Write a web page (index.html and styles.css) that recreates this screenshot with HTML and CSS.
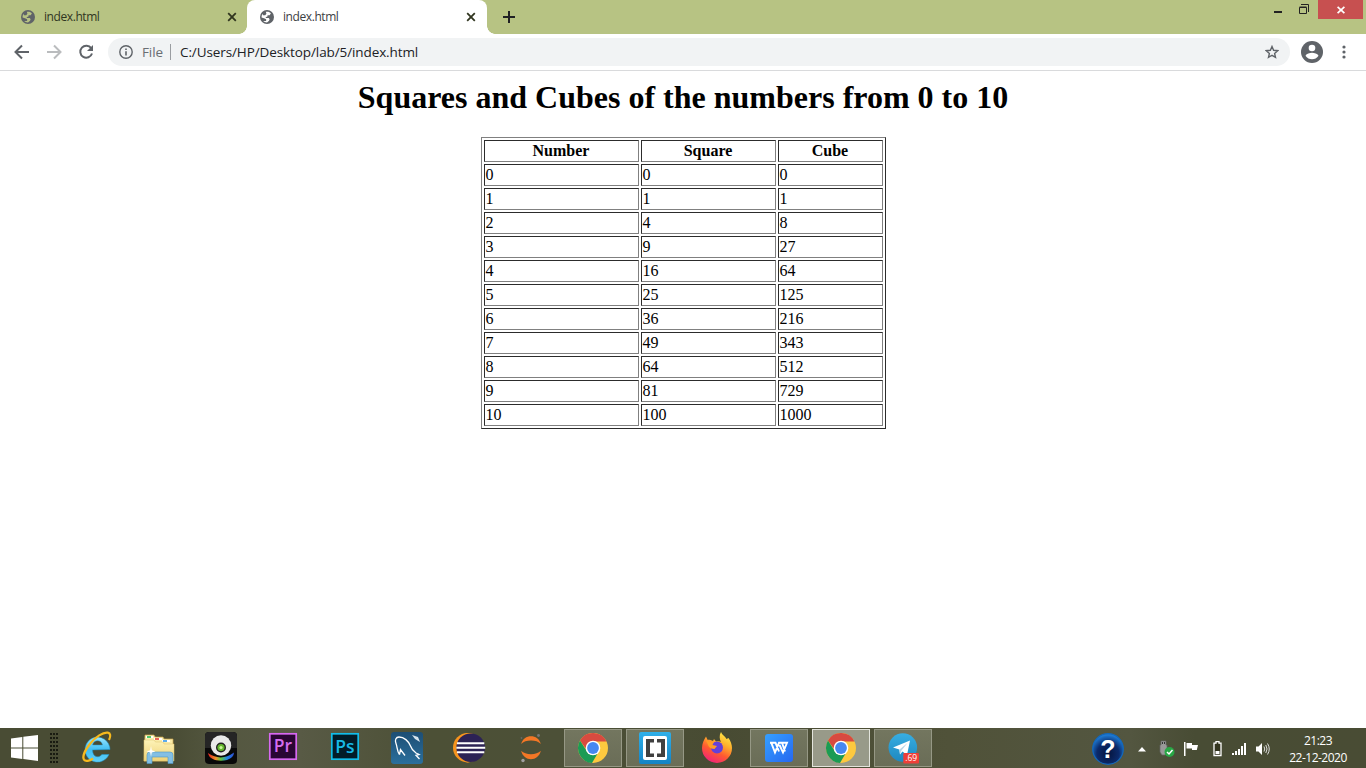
FILE: index.html
```html
<!DOCTYPE html>
<html lang="en">
<head>
<meta charset="utf-8">
<title>index.html</title>
<link rel="stylesheet" href="styles.css">
</head>
<body>
<svg class="defs" width="0" height="0" aria-hidden="true">
  <defs>
    <linearGradient id="ie" x1="0" y1="0" x2="0" y2="1"><stop offset="0" stop-color="#9be7ff"/><stop offset=".5" stop-color="#3fbdf2"/><stop offset="1" stop-color="#5fd0f8"/></linearGradient>
    <linearGradient id="folder" x1="0" y1="0" x2="0" y2="1"><stop offset="0" stop-color="#fdf3b8"/><stop offset="1" stop-color="#efd276"/></linearGradient>
    <linearGradient id="rainbow"><stop offset="0" stop-color="#e02020"/><stop offset=".3" stop-color="#f0902a"/><stop offset=".5" stop-color="#5cc840"/><stop offset=".75" stop-color="#2080e8"/><stop offset="1" stop-color="#3050d0"/></linearGradient>
    <linearGradient id="sql" x1="0" y1="0" x2="0" y2="1"><stop offset="0" stop-color="#1d4e74"/><stop offset="1" stop-color="#2b6f9c"/></linearGradient>
    <linearGradient id="brk" x1="0" y1="0" x2="0" y2="1"><stop offset="0" stop-color="#2fb0ea"/><stop offset="1" stop-color="#1583c4"/></linearGradient>
    <linearGradient id="fox" x1=".8" y1="0" x2=".3" y2="1"><stop offset="0" stop-color="#fff04a"/><stop offset=".35" stop-color="#ffb02c"/><stop offset=".65" stop-color="#ff5a30"/><stop offset="1" stop-color="#f0207c"/></linearGradient>
    <linearGradient id="wps" x1="0" y1="0" x2="1" y2="1"><stop offset="0" stop-color="#35a0ff"/><stop offset="1" stop-color="#2668f0"/></linearGradient>
    <linearGradient id="tg" x1="0" y1="0" x2="0" y2="1"><stop offset="0" stop-color="#37aee2"/><stop offset="1" stop-color="#1e88c0"/></linearGradient>
    <radialGradient id="help" cx=".5" cy=".65" r=".6"><stop offset="0" stop-color="#05143c"/><stop offset=".6" stop-color="#0b2a6b"/><stop offset="1" stop-color="#1e78d0"/></radialGradient>
    <symbol id="globe" viewBox="0 0 24 24"><circle cx="12" cy="12" r="12" fill="#5f6368"/><path class="land" d="M10 3.200c4-.8 7 .5 8.700 2.300L16.500 9H13l-.5 2.500-3 .5 1 1.500h4.500l1.500 2.500-1 2.500-3.500 3c-3 0-5-1-6.500-2.500h5V16l-2.500-1.500-5.300-1.800C2.600 10 3.400 8 5 6.500V9h4l2-2.500z"/></symbol>
    <symbol id="chrome" viewBox="0 0 36 36">
      <circle cx="18" cy="18" r="15" fill="#fdc93f"/>
      <path d="M5 10.500A15 15 0 0 1 31.500 11.500H18a6.500 6.500 0 0 0-5.900 9z" fill="#d84a40"/>
      <path d="M5 10.500A15 15 0 0 0 17 33l6.200-10.500a6.900 6.900 0 0 1-11.200-1z" fill="#1a9b55"/>
      <circle cx="18" cy="18" r="7.300" fill="#fff"/><circle cx="18" cy="18" r="5.900" fill="#4688f0"/>
    </symbol>
  </defs>
</svg>

<header class="tabstrip">
  <div class="tab">
    <svg class="favicon" width="14" height="14"><use href="#globe"/></svg>
    <span class="tab-title">index.html</span>
    <svg class="tab-close" width="10" height="10" viewBox="0 0 10 10"><path d="M1.200 1.200 8.800 8.800M8.800 1.200 1.200 8.800"/></svg>
  </div>
  <div class="tab active">
    <svg class="favicon" width="14" height="14"><use href="#globe"/></svg>
    <span class="tab-title">index.html</span>
    <svg class="tab-close" width="10" height="10" viewBox="0 0 10 10"><path d="M1.200 1.200 8.800 8.800M8.800 1.200 1.200 8.800"/></svg>
  </div>
  <svg class="new-tab" width="12" height="12" viewBox="0 0 12 12"><path d="M6 0v12M0 6h12"/></svg>
  <div class="window-controls">
    <svg class="minimize" width="8" height="19" viewBox="0 0 8 19"><path d="M0 11h8v2H0z" fill="#222"/></svg>
    <svg class="restore" width="10" height="19" viewBox="0 0 10 19"><path d="M.5 7.500h7v6h-7zM.5 7h7" fill="none" stroke="#222"/><path d="M2 4.500h7.500V12" fill="none" stroke="#222"/></svg>
    <div class="window-close"><svg width="8" height="8" viewBox="0 0 8 8"><path d="m.6.8 6.800 6.400M7.400.8.6 7.200" stroke="#fff" stroke-width="1.700"/></svg></div>
  </div>
</header>

<nav class="toolbar">
  <svg class="back" width="16" height="16" viewBox="0 0 16 16"><path d="M15 8H2M8 1.500 1.500 8 8 14.500"/></svg>
  <svg class="forward" width="16" height="16" viewBox="0 0 16 16"><path d="M1 8h13M8 1.500 14.500 8 8 14.500"/></svg>
  <svg class="reload" width="16" height="16" viewBox="0 0 16 16"><path d="M13.200 4.200A6 6 0 1 0 14 9.500"/><path d="M15 1v6H9z" class="solid"/></svg>
  <div class="omnibox">
    <svg class="info" width="14" height="14" viewBox="0 0 14 14"><circle cx="7" cy="7" r="6.200" fill="none" stroke="#5f6368" stroke-width="1.400"/><path d="M6.200 3.400h1.600V5H6.200zM6.200 6.200h1.600v4.400H6.200z" fill="#5f6368"/></svg>
    <span class="scheme">File</span>
    <span class="divider"></span>
    <span class="url">C:/Users/HP/Desktop/lab/5/index.html</span>
    <svg class="star" width="14" height="14" viewBox="0 0 14 14"><path d="m7 1.500 1.600 3.800 4.100.4-3.100 2.700.9 4L7 10.300l-3.500 2.100.9-4L1.300 5.700l4.100-.4z"/></svg>
  </div>
  <svg class="avatar" width="22" height="22" viewBox="0 0 22 22"><circle cx="11" cy="11" r="11" fill="#5f6368"/><circle cx="11" cy="7" r="3.300" fill="#fff"/><path d="M4.500 14.700c1-2.200 4.300-3 6.500-3s5.500.8 6.500 3C16 17 13.500 18.300 11 18.300S6 17 4.500 14.700z" fill="#fff"/></svg>
  <svg class="menu" width="4" height="14" viewBox="0 0 4 14"><g fill="#5f6368"><circle cx="2" cy="2" r="1.600"/><circle cx="2" cy="7" r="1.600"/><circle cx="2" cy="12" r="1.600"/></g></svg>
</nav>

<main class="page">
  <h1 class="heading">Squares and Cubes of the numbers from 0 to 10</h1>
  <table class="powers">
    <colgroup><col class="col-number"><col class="col-square"><col class="col-cube"></colgroup>
    <tr><th>Number</th><th>Square</th><th>Cube</th></tr>
    <tr><td>0</td><td>0</td><td>0</td></tr>
    <tr><td>1</td><td>1</td><td>1</td></tr>
    <tr><td>2</td><td>4</td><td>8</td></tr>
    <tr><td>3</td><td>9</td><td>27</td></tr>
    <tr><td>4</td><td>16</td><td>64</td></tr>
    <tr><td>5</td><td>25</td><td>125</td></tr>
    <tr><td>6</td><td>36</td><td>216</td></tr>
    <tr><td>7</td><td>49</td><td>343</td></tr>
    <tr><td>8</td><td>64</td><td>512</td></tr>
    <tr><td>9</td><td>81</td><td>729</td></tr>
    <tr><td>10</td><td>100</td><td>1000</td></tr>
  </table>
</main>

<footer class="taskbar">
  <svg class="start" width="27" height="26" viewBox="0 0 27 26"><path d="M0 3.600 11.300 2v10.500H0zM12.300 1.800 27 0v12.500H12.300zM0 13.500h11.300V24L0 22.400zM12.300 13.500H27V26l-14.700-1.900z" fill="#fff"/></svg>
  <div class="grip"></div>
  <div class="apps">
    <div class="app"><svg width="36" height="36" viewBox="0 0 36 36">
      <path d="M31 19.500a12.500 12.500 0 1 0-1 5h-7.200c-2.800 4.200-9.300 2.600-9.300-4.600zM13.600 15c.8-5.800 9.200-5.800 9.900 0z" fill="url(#ie)" fill-rule="evenodd" stroke="#2196cf" stroke-width=".5"/>
      <path d="M30 10c2-4 1.500-6.800-1.200-7.300C24 2 16.500 7 11.500 13.200S3 26.500 5 29.700c1.500 2.200 5.500 1.200 9-1.200" fill="none" stroke="#f7b91d" stroke-width="2.200"/>
    </svg></div>
    <div class="app"><svg width="36" height="36" viewBox="0 0 36 36">
      <path d="M4 5h9l1 2h8l1 2h9v22H3z" fill="url(#folder)" stroke="#c9a54b" stroke-width=".7"/>
      <path d="M5 6h7v2H5zM13 8h8v2h-8zM21 10h8v2h-8z" fill="#fff"/>
      <path d="M6 6.200h4v1.600H6z" fill="#28b848"/><path d="M14 8.200h4v1.600h-4z" fill="#e04030"/><path d="M22 10.200h4v1.600h-4z" fill="#3296e8"/>
      <path d="M3 10h10l1.500 2H22l1 2h10v17H3z" fill="url(#folder)" stroke="#dec16e" stroke-width=".5"/>
      <path d="M6 33.500V25q0-3 3-3h20q3 0 3 3v8.500h-5V27H11v6.500z" fill="#83bfe4" stroke="#4b94c4" stroke-width=".6"/>
      <path d="m10 16 .8 4.200 3.700 1.300-3.700 1-.8 4-.8-4-3.700-1 3.700-1.300z" fill="#fff"/>
    </svg></div>
    <div class="app"><svg width="36" height="36" viewBox="0 0 36 36">
      <rect x="2" y="2" width="32" height="32" rx="4" fill="#090909"/><path d="M2 6q0-4 4-4h24q4 0 4 4v12H2z" fill="#252525"/>
      <path d="M5 23q13 9 26-.5 0 5-7 7.500C16 32 6 30 5 23z" fill="url(#rainbow)"/>
      <circle cx="18" cy="15.500" r="10.200" fill="#e9e9e9"/><circle cx="18" cy="17.500" r="5" fill="#222"/><circle cx="18" cy="17.500" r="3.600" fill="#62b52d"/><circle cx="18" cy="17.500" r="1.600" fill="#c9f59a"/>
    </svg></div>
    <div class="app"><svg width="36" height="36" viewBox="0 0 36 36"><rect x="4.800" y="3.800" width="26.400" height="25.400" fill="#2a0634" stroke="#d869f2" stroke-width="1.700"/><text x="18" y="22" class="adobe" fill="#d56df0">Pr</text></svg></div>
    <div class="app"><svg width="36" height="36" viewBox="0 0 36 36"><rect x="4.800" y="3.800" width="26.400" height="25.400" fill="#021c28" stroke="#12bdea" stroke-width="1.700"/><text x="18" y="22.500" class="adobe" fill="#18b9e6">Ps</text></svg></div>
    <div class="app"><svg width="36" height="36" viewBox="0 0 36 36">
      <rect x="2" y="2" width="32" height="32" rx="3" fill="url(#sql)"/>
      <path d="M10.500 24.500c-2.500-3-2-7-3.500-11C5.500 10 7 7 10 7c5 0 9.500 4 11.500 9 1 3 2.500 5 5.500 7l3 1.500-3 .8 3.500 3.700M10.500 24.500l1-5 4.500 6" fill="none" stroke="#fff" stroke-width="1.300"/>
      <path d="m23 5 3 4 5 3-2-5-3-1z" fill="#d5e3ed"/>
    </svg></div>
    <div class="app"><svg width="36" height="36" viewBox="0 0 36 36">
      <path d="M17 3A14.900 14.900 0 0 0 17 32.500Q24 30 24 17.700T17 3z" fill="#f7941e"/><circle cx="16.700" cy="17.700" r="14.700" fill="#f7941e"/>
      <circle cx="19.700" cy="17.700" r="14.300" fill="#2c2255"/><path d="M6 13.200h27.300M5.400 17.800h28.800M6 22.200h27.300" stroke="#fff" stroke-width="2"/>
    </svg></div>
    <div class="app"><svg width="36" height="36" viewBox="0 0 36 36">
      <path d="M8.200 14C10.500 3.500 25.500 3.500 27.800 14c-4-4.600-15.600-4.600-19.600 0zM8.200 20.800c4 4.600 15.600 4.600 19.600 0C25.500 32 10.500 32 8.200 20.800z" fill="#f37726"/>
      <circle cx="25.500" cy="5.500" r="1.400" fill="#777"/><circle cx="8.500" cy="8" r=".9" fill="#666"/><circle cx="10" cy="30.500" r="1.700" fill="#a0a0a0"/>
    </svg></div>
    <div class="app open"><svg width="36" height="36"><use href="#chrome"/></svg></div>
    <div class="app open"><svg width="36" height="36" viewBox="0 0 36 36">
      <rect x="2" y="2" width="32" height="32" rx="2" fill="url(#brk)"/><rect x="6" y="6" width="24" height="24" rx="2" fill="#fff"/>
      <path d="M9 9h8v3.500h-4v11h4V27H9zM28 9h-8v3.500h4v11h-4V27h8z" fill="#404040"/>
    </svg></div>
    <div class="app"><svg width="36" height="36" viewBox="0 0 36 36">
      <path d="M22 2c1 3 4 4 5.500 7l2-1c2 3 3.500 6.500 3.500 10a15 15 0 0 1-30 0c0-4.500 2-8.500 4-11.500l1.500 3.200C10 9.500 12 9.800 14 11l1-2 2 2.500c2-.5 4-.5 5 .5-1.500-3-2-6.500 0-10z" fill="url(#fox)"/>
      <circle cx="18" cy="17.500" r="6" fill="#6440d8"/><path d="M6 8c2 4 6 3.500 9 4l-1.500 3 4.500 1-2.500 3c-3 0-5-1-6-3z" fill="#ff9c26"/>
    </svg></div>
    <div class="app open"><svg width="36" height="36" viewBox="0 0 36 36"><rect x="4" y="4" width="28" height="28" rx="3" fill="url(#wps)"/><path d="M9 12.800h5.500l3.500 8.700M10.300 12.800l3.700 9.700 4-9.700h3l3 8.700M18.500 15l3.500 7.500 4-9.700h-5" fill="none" stroke="#fff" stroke-width="1.900"/></svg></div>
    <div class="app open current"><svg width="36" height="36"><use href="#chrome"/></svg></div>
    <div class="app open"><svg width="36" height="36" viewBox="0 0 36 36">
      <circle cx="17.800" cy="17.500" r="14.300" fill="url(#tg)"/><path d="m8 17.500 17-7-3 14.500-4.500-3.500-2.500 3-.7-5z" fill="#fff"/><path d="m14.500 19.500 8-6.500-6 7.500-1.500 4z" fill="#b9d5e7"/>
      <rect x="18.300" y="23" width="15.700" height="10.500" rx="1" fill="#ef3e38"/><text x="26.200" y="31.200" class="badge">.69</text>
    </svg></div>
  </div>
  <div class="tray">
    <svg class="help" width="32" height="32" viewBox="0 0 32 32"><circle cx="16" cy="16" r="15.300" fill="url(#help)" stroke="#1268bd" stroke-width="1.200"/><text x="16" y="25" class="help-mark">?</text></svg>
    <svg class="caret" width="8" height="5" viewBox="0 0 8 5"><path d="M4 0 8 4.500H0z" fill="#fff"/></svg>
    <svg class="usb" width="16" height="18" viewBox="0 0 16 18"><path d="M2 1h5v4h1v7l-2 3H3l-2-3V5h1z" fill="#999" stroke="#666" stroke-width=".7"/><path d="M3 2h1v2H3zM5 2h1v2H5z" fill="#333"/><circle cx="10.500" cy="12" r="5" fill="#28a745"/><path d="m8 12 2 2 3.500-4" fill="none" stroke="#fff" stroke-width="1.500"/></svg>
    <svg class="flag" width="16" height="16" viewBox="0 0 16 16"><path d="M1 1h1.500v14H1z" fill="#fff"/><path d="M3.500 2h5.500v2h6l-1.200 5H9V7.500H3.500z" fill="#fff"/></svg>
    <svg class="battery" width="9" height="16" viewBox="0 0 9 16"><path d="M3 .7h3v1.500h2v12.300H1V2.200h2z" fill="#33351f" stroke="#fff" stroke-width="1.300"/><path d="M2.500 10h4v3h-4z" fill="#fff"/></svg>
    <svg class="signal" width="15" height="12" viewBox="0 0 15 12"><path d="M0 10h2v2H0zM3 8h2v4H3zM6 6h2v6H6zM9 3h2v9H9zM12 0h2v12h-2z" fill="#fff"/></svg>
    <svg class="volume" width="14" height="14" viewBox="0 0 14 14"><path d="M0 4.500h2.500L6 1v12L2.500 9.500H0z" fill="#fff"/><path d="M8 4.500q1.500 2.500 0 5M9.800 3q2.500 4 0 8M11.500 1.500q3.500 5.500 0 11" fill="none" stroke="#ddd"/></svg>
    <div class="clock"><span class="time">21:23</span><span class="date">22-12-2020</span></div>
  </div>
</footer>
</body>
</html>
```

FILE: styles.css
```css
* { box-sizing: border-box; }
body { margin: 0; width: 1366px; height: 768px; overflow: hidden; display: flex; flex-direction: column; background: #fff; font-family: "Open Sans", "Noto Sans", sans-serif; }
svg { display: block; flex: none; }
.defs { position: absolute; }

.tabstrip { height: 34px; flex: none; display: flex; background: #b7c383; }
.tab { width: 247px; height: 34px; display: flex; align-items: center; padding: 0 10px 0 21px; color: #30351f; --tab-bg: #b7c383; }
.tab.active { width: 240px; padding: 0 11px 0 13px; position: relative; background: #fff; border-radius: 8px 8px 0 0; color: #3c4043; --tab-bg: #fff; }
.tab.active::before, .tab.active::after { content: ""; position: absolute; bottom: 0; width: 8px; height: 8px; }
.tab.active::before { left: -8px; background: radial-gradient(circle at 0 0, transparent 7.5px, #fff 8px); }
.tab.active::after { right: -8px; background: radial-gradient(circle at 100% 0, transparent 7.5px, #fff 8px); }
.land { fill: var(--tab-bg); }
.tab-title { margin-left: 9px; flex: 1; font-size: 12px; line-height: 16px; letter-spacing: -0.42px; }
.tab-close { fill: none; stroke: #30351f; stroke-width: 1.8; }
.new-tab { margin: 11px 0 0 16px; fill: none; stroke: #202124; stroke-width: 2; }
.window-controls { margin-left: auto; display: flex; align-items: flex-start; }
.restore { margin-left: 17px; }
.window-close { width: 45px; height: 19px; margin: 0 3px 0 9px; display: flex; align-items: center; justify-content: center; background: #c75050; }

.toolbar { height: 37px; flex: none; display: flex; align-items: center; padding: 0 20px 0 14px; border-bottom: 1px solid #d9dadc; }
.back, .forward, .reload { fill: none; stroke: #5f6368; stroke-width: 2; }
.forward { margin-left: 16px; stroke: #babcbe; }
.reload { margin-left: 16px; }
.solid { fill: #5f6368; stroke: none; }
.omnibox { width: 1182px; height: 28px; margin-left: 14px; padding: 0 11px; display: flex; align-items: center; border-radius: 14px; background: #f1f3f4; font-size: 13.5px; line-height: 20px; color: #202124; white-space: nowrap; }
.scheme { width: 21px; margin-left: 9px; color: #6a6e73; letter-spacing: -0.1px; }
.divider { width: 1px; height: 16px; margin: 0 9px 0 7px; background: #9a9da1; }
.star { margin-left: auto; fill: none; stroke: #5f6368; stroke-width: 1.4; }
.url { letter-spacing: -0.1px; }
.avatar { margin-left: 11px; }
.menu { margin-left: auto; }

.page { flex: 1; font-family: "Liberation Serif", "Times New Roman", serif; color: #000; }
.heading { margin: 8px 0 21px; text-align: center; font-size: 32px; line-height: 37px; font-weight: bold; }
.powers { width: 405px; margin: 0 auto 0 481px; table-layout: fixed; border: 1px solid; border-color: #808080 #2c2c2c #2c2c2c #808080; border-spacing: 2px; font-size: 16px; line-height: 18px; }
.col-number { width: 155px; }
.col-square { width: 135px; }
.col-cube { width: 105px; }
.powers th, .powers td { height: 22px; padding: 1px; border: 1px solid; border-color: #2c2c2c #808080 #808080 #2c2c2c; }
.powers th { padding-right: 2px; }
.powers td { padding-left: 0.5px; }

.taskbar { height: 40px; flex: none; display: flex; align-items: flex-start; color: #fff; background: linear-gradient(90deg, #494c34 0 170px, #545740 220px, #585a45 300px, #4c5036 430px, #4c5037 560px, #484b33 720px, #505239 950px, #535640 1130px, #484c34 1195px, #494c34 100%); }
.start { margin: 7px 0 0 11px; }
.grip { width: 9px; height: 30px; margin: 5px 9px 0 12px; background: radial-gradient(circle at 1px 1px, #191b11 1px, transparent 1.3px) 0 0 / 3px 4px; }
.apps { display: flex; gap: 4px; padding-top: 1px; }
.app { width: 58px; height: 38px; display: flex; align-items: center; justify-content: center; }
.open { border: 1px solid #969885; background: linear-gradient(#73765f, #6a6d57); }
.current { border-color: #e3e4dc; background: #989a89; }
.adobe { font: 600 17.5px "Open Sans", sans-serif; text-anchor: middle; }
.badge { font: 8.5px "Open Sans", sans-serif; fill: #fff; text-anchor: middle; }
.help-mark { font: bold 25px/1 "Liberation Sans", sans-serif; fill: #fff; text-anchor: middle; }
.tray { margin-left: auto; display: flex; align-items: flex-start; }
.help { margin-top: 5px; overflow: visible; }
.caret { margin: 19px 0 0 14px; }
.usb { margin: 12px 0 0 13px; }
.flag { margin: 13px 0 0 8px; }
.battery { margin: 13px 0 0 14px; }
.signal { margin: 15px 0 0 10px; }
.volume { margin: 14px 0 0 9px; }
.clock { width: 60px; margin: 4px 18px 0 18px; display: flex; flex-direction: column; align-items: center; font-size: 12px; line-height: 17px; letter-spacing: -0.5px; white-space: nowrap; }
```
